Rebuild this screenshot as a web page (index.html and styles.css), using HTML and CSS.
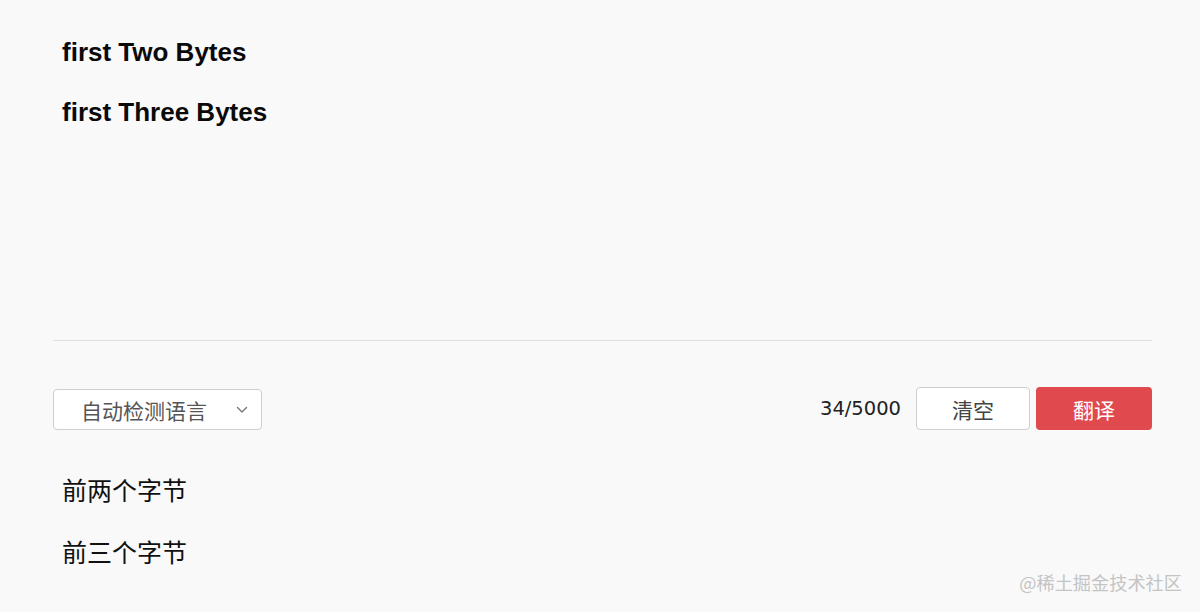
FILE: index.html
```html
<!DOCTYPE html>
<html lang="zh">
<head>
<meta charset="utf-8">
<link rel="stylesheet" href="styles.css">
</head>
<body>
<div class="page">
  <div class="source">
    <p class="src-line">first Two Bytes</p>
    <p class="src-line">first Three Bytes</p>
  </div>
  <div class="toolbar">
    <div class="select">
      <span class="select-text">自动检测语言</span>
      <svg class="chev" width="12" height="8" viewBox="0 0 12 8"><path d="M1.5 1.5 L6 6 L10.5 1.5" fill="none" stroke="#777" stroke-width="1.4" stroke-linecap="round" stroke-linejoin="round"/></svg>
    </div>
    <div class="actions">
      <span class="count">34/5000</span>
      <button class="btn btn-clear">清空</button>
      <button class="btn btn-go">翻译</button>
    </div>
  </div>
  <div class="result">
    <p class="res-line">前两个字节</p>
    <p class="res-line">前三个字节</p>
  </div>
</div>
<div class="watermark">@稀土掘金技术社区</div>
</body>
</html>
```
FILE: styles.css
```css
html, body {
  margin: 0;
  padding: 0;
  background: #f9f9f9;
  height: 612px;
  overflow: hidden;
}
body {
  font-family: "Liberation Sans", "Noto Sans CJK SC", sans-serif;
  color: #111;
  position: relative;
}
.page {
  padding: 0 48px 0 53px;
}
.source {
  height: 318px;
  padding: 22px 9px 0;
  border-bottom: 1px solid #e0e0e0;
  box-sizing: content-box;
}
.src-line {
  margin: 0;
  font-size: 26px;
  font-weight: bold;
  line-height: 60px;
  color: #0a0a0a;
}
.toolbar {
  margin-top: 46px;
  height: 43px;
  display: flex;
  align-items: center;
  justify-content: space-between;
}
.select {
  width: 209px;
  height: 41px;
  border: 1px solid #cfcfcf;
  border-radius: 4px;
  background: #fff;
  display: flex;
  align-items: center;
  padding: 0 13px 0 27px;
  box-sizing: border-box;
  justify-content: space-between;
  margin-top: 2px;
}
.select-text {
  font-family: "Noto Sans CJK SC", sans-serif;
  font-size: 21px;
  color: #555;
}
.chev { display: block; }
.actions {
  display: flex;
  align-items: center;
}
.count {
  font-family: "DejaVu Sans", sans-serif;
  font-size: 19.5px;
  color: #222;
  margin-right: 15px;
}
.btn {
  height: 43px;
  width: 114px;
  border-radius: 4px;
  font-family: "Noto Sans CJK SC", sans-serif;
  font-size: 21px;
  padding: 0;
  box-sizing: border-box;
}
.btn-clear {
  background: #fff;
  border: 1px solid #cfcfcf;
  color: #444;
}
.btn-go {
  margin-left: 6px;
  width: 116px;
  background: #e04a4e;
  border: none;
  color: #fff;
}
.result {
  padding: 28px 9px 0;
}
.res-line {
  margin: 0;
  font-family: "Noto Sans CJK SC", sans-serif;
  font-size: 25px;
  line-height: 62px;
  color: #111;
}
.watermark {
  position: absolute;
  right: 18px;
  top: 570px;
  font-family: "Noto Sans CJK SC", sans-serif;
  font-size: 18.2px;
  line-height: 24px;
  color: #c4c4c4;
}
```
